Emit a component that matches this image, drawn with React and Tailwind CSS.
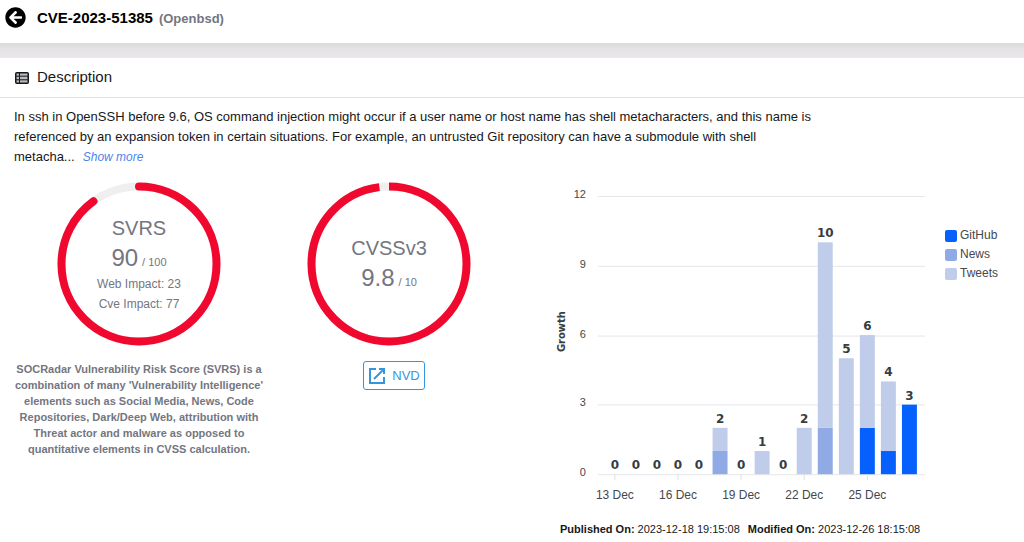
import { FaArrowCircleLeft } from 'react-icons/fa';

const SERIES = [
  { key: 'github', label: 'GitHub', color: '#0560fd' },
  { key: 'news', label: 'News', color: '#8faae4' },
  { key: 'tweets', label: 'Tweets', color: '#bfcdea' },
];

const growth = [
  { date: '13 Dec', github: 0, news: 0, tweets: 0 },
  { date: '14 Dec', github: 0, news: 0, tweets: 0 },
  { date: '15 Dec', github: 0, news: 0, tweets: 0 },
  { date: '16 Dec', github: 0, news: 0, tweets: 0 },
  { date: '17 Dec', github: 0, news: 0, tweets: 0 },
  { date: '18 Dec', github: 0, news: 1, tweets: 1 },
  { date: '19 Dec', github: 0, news: 0, tweets: 0 },
  { date: '20 Dec', github: 0, news: 0, tweets: 1 },
  { date: '21 Dec', github: 0, news: 0, tweets: 0 },
  { date: '22 Dec', github: 0, news: 0, tweets: 2 },
  { date: '23 Dec', github: 0, news: 2, tweets: 8 },
  { date: '24 Dec', github: 0, news: 0, tweets: 5 },
  { date: '25 Dec', github: 2, news: 0, tweets: 4 },
  { date: '26 Dec', github: 1, news: 0, tweets: 3 },
  { date: '27 Dec', github: 3, news: 0, tweets: 0 },
];

function Gauge({ percent, rounded, children }) {
  return (
    <div className="grid size-[164px] place-items-center">
      <svg viewBox="0 0 164 164" className="col-start-1 row-start-1 size-full" fill="none" strokeWidth="8">
        <circle cx="82" cy="82" r="77.5" stroke="#efefef" />
        <circle
          cx="82"
          cy="82"
          r="77.5"
          stroke="#f0082f"
          pathLength="100"
          strokeDasharray={`${percent} 100`}
          strokeLinecap={rounded ? 'round' : 'butt'}
          transform="rotate(-90 82 82)"
        />
      </svg>
      <div className="col-start-1 row-start-1 text-center text-[#74767f]">{children}</div>
    </div>
  );
}

function Score({ label, value, max }) {
  return (
    <>
      <div className="text-xl/7">{label}</div>
      <div className="flex items-baseline justify-center gap-1">
        <span className="text-2xl/8">{value}</span>
        <span className="text-[11px]/4">/ {max}</span>
      </div>
    </>
  );
}

function GrowthChart() {
  const left = 48;
  const right = 376;
  const bottom = 293;
  const unit = 23.25;
  const step = 21.1;

  return (
    <svg viewBox="0 0 380 330" className="w-full min-w-0 max-w-[600px] flex-1" role="img" aria-label="Growth">
      {[0, 3, 6, 9, 12].map((tick) => {
        const y = Math.round(bottom - tick * unit);
        return (
          <g key={tick}>
            <line x1={left} x2={right} y1={y + 0.5} y2={y + 0.5} stroke="#e4e6e8" />
            <text x="36" y={y + 2} textAnchor="end" fontSize="11" fill="#44484d">
              {tick}
            </text>
          </g>
        );
      })}

      {growth.map((day, i) => {
        const x = 65 + i * step;
        const total = day.github + day.news + day.tweets;
        let y = bottom;
        return (
          <g key={day.date}>
            {SERIES.map((s) => {
              const height = day[s.key] * unit;
              y -= height;
              return <rect key={s.key} x={x - 7.5} y={y} width="15" height={height} fill={s.color} />;
            })}
            <text
              x={x}
              y={y - 5}
              textAnchor="middle"
              fontSize="12"
              fill="#373d3f"
              className="font-['DejaVu_Sans',sans-serif] font-bold"
            >
              {total}
            </text>
            {i % 3 === 0 && (
              <>
                <line x1={x} x2={x} y1={bottom} y2={bottom + 6} stroke="#dfe1e3" />
                <text x={x} y={bottom + 25} textAnchor="middle" fontSize="12" fill="#44484d">
                  {day.date}
                </text>
              </>
            )}
          </g>
        );
      })}

      <text
        transform="translate(15 150) rotate(-90)"
        textAnchor="middle"
        fontSize="10"
        fill="#373d3f"
        className="font-['DejaVu_Sans',sans-serif] font-bold"
      >
        Growth
      </text>
    </svg>
  );
}

function App() {
  return (
    <div className="min-h-screen bg-white font-['Liberation_Sans',Arial,sans-serif] text-[#16181b]">
      <header className="flex h-[43px] items-center gap-[11px] px-[5px] pb-2">
        <button type="button" aria-label="Back" className="text-black">
          <FaArrowCircleLeft size={21} />
        </button>
        <h1 className="flex items-baseline gap-1.5 pt-px text-[15px] font-bold text-black">
          CVE-2023-51385 <span className="text-[13px] text-[#74767f]">(Openbsd)</span>
        </h1>
      </header>
      <div className="h-[15px] bg-linear-to-b from-[#dbdadc] via-[#e6e4e6] to-[#e9e7e9]" />

      <main>
        <h2 className="flex h-10 items-center gap-2 border-b border-[#e3e3e5] px-[15px] text-[15px]">
          <svg viewBox="0 0 14 12" className="h-3 w-3.5" fill="none" stroke="currentColor">
            <rect x="0.75" y="0.75" width="12.5" height="10.5" rx="1" fill="#b9babd" strokeWidth="1.5" />
            <path d="M4.5 1v10M1 4.2h12M1 7.8h12" />
          </svg>
          Description
        </h2>

        <p className="max-w-[830px] px-[14px] pt-[9px] text-[13px]/5">
          In ssh in OpenSSH before 9.6, OS command injection might occur if a user name or host name has shell
          metacharacters, and this name is referenced by an expansion token in certain situations. For example, an
          untrusted Git repository can have a submodule with shell{' '}
          <span className="inline-flex items-baseline gap-2">
            <span>metacha...</span>
            <a href="#more" className="text-xs/5 text-[#4d83ee] italic">
              Show more
            </a>
          </span>
        </p>

        <div className="grid grid-cols-[250fr_250fr_496fr] px-[14px] pt-[15px]">
          <section className="flex flex-col items-center">
            <Gauge percent={90} rounded>
              <Score label="SVRS" value="90" max="100" />
              <div className="text-xs/5">Web Impact: 23</div>
              <div className="text-xs/5">Cve Impact: 77</div>
            </Gauge>
            <p className="mt-[15px] max-w-full text-center text-[11px]/4 font-bold text-[#74767f]">
              SOCRadar Vulnerability Risk Score (SVRS) is a combination of many 'Vulnerability Intelligence' elements
              such as Social Media, News, Code Repositories, Dark/Deep Web, attribution with Threat actor and malware
              as opposed to quantitative elements in CVSS calculation.
            </p>
          </section>

          <section className="flex flex-col items-center">
            <Gauge percent={98}>
              <Score label="CVSSv3" value="9.8" max="10" />
            </Gauge>
            <a
              href="#nvd"
              className="mt-[15px] ml-2.5 flex h-[29px] items-center gap-1.5 rounded-[3px] border border-[#3596e0] px-1 text-[13px] text-[#3596e0]"
            >
              <svg viewBox="0 0 18 18" className="size-[18px]" fill="none" stroke="currentColor" strokeWidth="2">
                <path d="M8 2H2v14h14v-6M11 2h5v5M16 2 6 12" />
              </svg>
              NVD
            </a>
          </section>

          <section className="pl-9">
            <div className="flex items-start gap-4">
              <GrowthChart />
              <ul className="mt-11 flex shrink-0 flex-col pr-3 text-xs/[19px] text-[#44484d]">
                {SERIES.map((s) => (
                  <li key={s.key} className="flex items-center gap-[3px]">
                    <span className="size-3 rounded-xs" style={{ backgroundColor: s.color }} />
                    {s.label}
                  </li>
                ))}
              </ul>
            </div>
            <div className="mt-2.5 flex gap-2 pl-2.5 text-[11px]/4">
              <div>
                <b>Published On:</b> 2023-12-18 19:15:08
              </div>
              <div>
                <b>Modified On:</b> 2023-12-26 18:15:08
              </div>
            </div>
          </section>
        </div>
      </main>
    </div>
  );
}

export default App;
